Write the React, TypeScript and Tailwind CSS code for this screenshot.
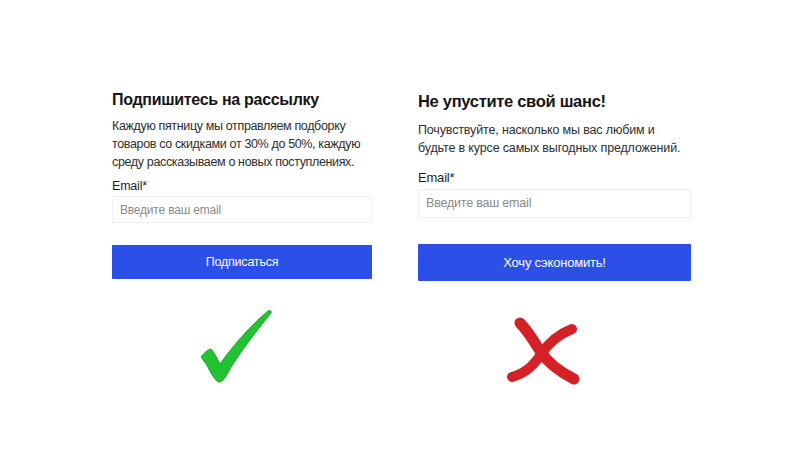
import React from "react";

const font = { fontFamily: '"Liberation Sans", Arial, sans-serif' };

function Check() {
  return (
    <svg width="90" height="90" viewBox="0 0 90 90" className="block">
      <path
        d="M9 55 C12 51 15 48 19 47 C22 50 25 56 28 62 C40 45 58 24 76 9 C78 8 80 9 79 11 C64 30 46 52 34 74 C32 78 29 80 27 80 C24 79 21 75 18 69 C15 63 12 59 9 55 Z"
        fill="#22c232"
        stroke="#1cab2a"
        strokeWidth="1"
        strokeLinejoin="round"
      />
    </svg>
  );
}

function Cross() {
  return (
    <svg width="80" height="75" viewBox="0 0 80 75" className="block">
      <path
        d="M14 8 C20 14 28 26 34 36 C42 48 56 58 68 64"
        fill="none"
        stroke="#d42128"
        strokeWidth="11"
        strokeLinecap="round"
      />
      <path
        d="M66 14 C56 18 44 26 36 38 C28 50 20 58 6 62"
        fill="none"
        stroke="#d42128"
        strokeWidth="10"
        strokeLinecap="round"
      />
    </svg>
  );
}

export default function App() {
  return (
    <div className="w-[800px] h-[450px] bg-white overflow-hidden flex" style={font}>
      <div className="w-[260px] ml-[112px] pt-[89px] flex flex-col">
        <h1 className="text-[16px] leading-[22px] font-bold tracking-[-0.3px] text-[#151515] whitespace-nowrap">
          Подпишитесь на рассылку
        </h1>
        <p className="mt-[6px] text-[12.5px] leading-[18px] tracking-[-0.35px] text-[#2e2e2e] whitespace-nowrap">
          Каждую пятницу мы отправляем подборку
          <br />
          товаров со скидками от 30% до 50%, каждую
          <br />
          среду рассказываем о новых поступлениях.
        </p>
        <div className="mt-[6px] text-[12.5px] leading-[18px] tracking-[-0.2px] text-[#1f1f1f]">Email*</div>
        <div className="mt-[1px] h-[27px] border border-[#f0f0f0] flex items-center px-[7px] text-[12px] tracking-[-0.2px] text-[#8a8a8a]">
          Введите ваш email
        </div>
        <div className="mt-[22px] h-[34px] bg-[#2c4fe8] rounded-[1px] flex items-center justify-center text-[12.5px] tracking-[-0.2px] text-white">
          Подписаться
        </div>
        <div className="mt-[23px] ml-[80px]">
          <Check />
        </div>
      </div>
      <div className="w-[273px] ml-[46px] pt-[90px] flex flex-col">
        <h1 className="text-[16.5px] leading-[22px] font-bold tracking-[-0.3px] text-[#151515] whitespace-nowrap">
          Не упустите свой шанс!
        </h1>
        <p className="mt-[9px] text-[12.5px] leading-[18px] tracking-[-0.15px] text-[#2e2e2e] whitespace-nowrap">
          Почувствуйте, насколько мы вас любим и
          <br />
          будьте в курсе самых выгодных предложений.
        </p>
        <div className="mt-[12px] text-[13px] leading-[18px] tracking-[-0.2px] text-[#1f1f1f]">Email*</div>
        <div className="mt-[2px] h-[29px] border border-[#f0f0f0] flex items-center px-[7px] text-[12.5px] tracking-[-0.2px] text-[#8a8a8a]">
          Введите ваш email
        </div>
        <div className="mt-[26px] h-[37px] bg-[#2c4fe8] rounded-[1px] flex items-center justify-center text-[13px] tracking-[-0.2px] text-white">
          Хочу сэкономить!
        </div>
        <div className="mt-[34px] ml-[88px]">
          <Cross />
        </div>
      </div>
    </div>
  );
}
